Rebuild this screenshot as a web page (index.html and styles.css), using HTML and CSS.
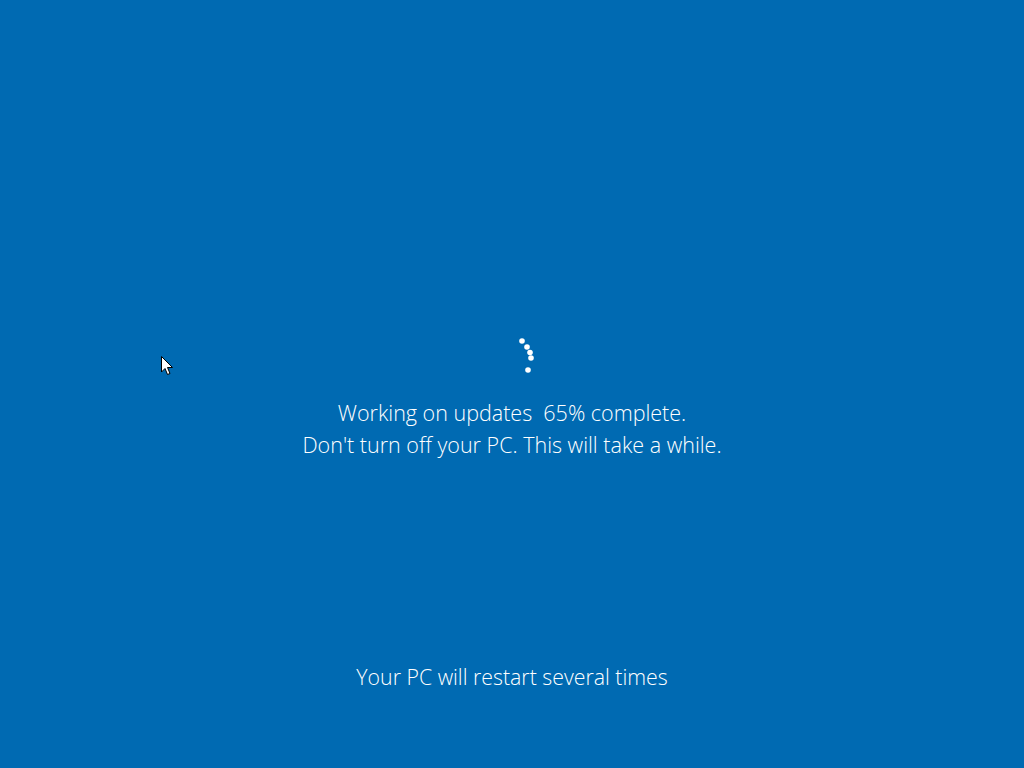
FILE: index.html
```html
<!DOCTYPE html>
<html lang="en">
<head>
  <meta charset="UTF-8">
  <meta name="viewport" content="width=device-width, initial-scale=1.0">
  <title>Working on updates</title>
  <link rel="stylesheet" href="styles.css">
</head>
<body>
  <div class="screen">
    <div class="update">
      <svg class="update__spinner" width="48" height="48" viewBox="0 0 48 48">
        <circle cx="34" cy="9" r="2.8" fill="#fff"/>
        <circle cx="39" cy="15" r="2.8" fill="#fff"/>
        <circle cx="42" cy="20.5" r="2.8" fill="#fff"/>
        <circle cx="43" cy="26" r="2.8" fill="#fff"/>
        <circle cx="40" cy="38" r="2.8" fill="#fff"/>
      </svg>
      <p class="update__text">Working on updates&nbsp; 65% complete.<br>Don't turn off your PC. This will take a while.</p>
    </div>
    <p class="restart">Your PC will restart several times</p>
    <svg class="cursor" width="14" height="20" viewBox="0 0 14 20">
      <path d="M0.5 0.5 L0.5 16 L4 12.5 L6.5 18.5 L9 17.5 L6.5 11.5 L11.5 11.5 Z" fill="#fff" stroke="#000" stroke-width="1"/>
    </svg>
  </div>
</body>
</html>
```

FILE: styles.css
```css
html,
body {
  margin: 0;
  height: 100%;
}

body {
  background: #006ab2;
  font-family: "Open Sans", "Noto Sans", sans-serif;
  font-weight: 300;
  color: #fff;
  overflow: hidden;
}

.screen {
  position: relative;
  height: 768px;
  display: flex;
  flex-direction: column;
  align-items: center;
}

.update {
  display: flex;
  flex-direction: column;
  align-items: center;
  padding-top: 332px;
}

.update__spinner {
  display: block;
}

.update__text {
  margin: 17px 0 0;
  font-size: 21.5px;
  line-height: 32px;
  text-align: center;
}

.restart {
  margin: auto 0 75px;
  font-size: 21.3px;
  line-height: 32px;
}

.cursor {
  position: absolute;
  left: 161px;
  top: 356px;
}
```
